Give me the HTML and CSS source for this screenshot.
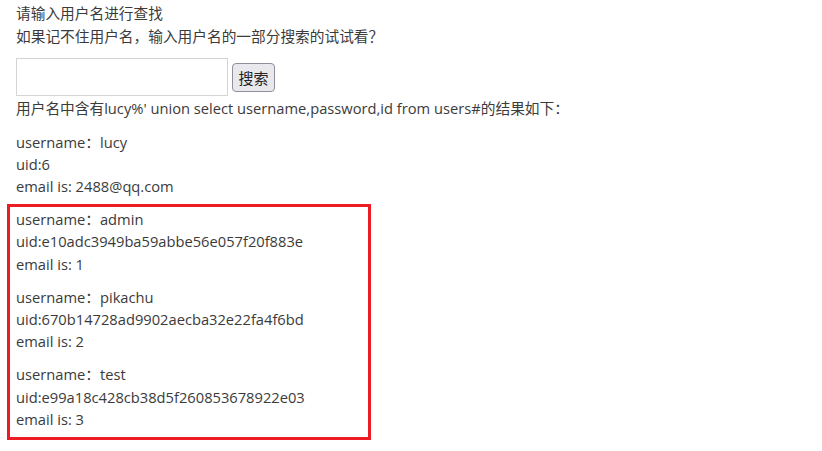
FILE: index.html
```html
<!DOCTYPE html>
<html>
<head>
<meta charset="utf-8">
<link rel="stylesheet" href="styles.css">
</head>
<body>
<div class="page">
  <p class="line first">请输入用户名进行查找</p>
  <p class="line">如果记不住用户名，输入用户名的一部分搜索的试试看？</p>
  <form class="search">
    <input class="search-input" type="text">
    <button class="search-btn" type="button">搜索</button>
  </form>
  <p class="line">用户名中含有lucy%' union select username,password,id from users#的结果如下：</p>
  <div class="entry">
    <p class="line">username：lucy</p>
    <p class="line">uid:6</p>
    <p class="line">email is: 2488@qq.com</p>
  </div>
  <div class="highlight">
    <div class="entry">
      <p class="line">username：admin</p>
      <p class="line">uid:e10adc3949ba59abbe56e057f20f883e</p>
      <p class="line">email is: 1</p>
    </div>
    <div class="entry">
      <p class="line">username：pikachu</p>
      <p class="line">uid:670b14728ad9902aecba32e22fa4f6bd</p>
      <p class="line">email is: 2</p>
    </div>
    <div class="entry">
      <p class="line">username：test</p>
      <p class="line">uid:e99a18c428cb38d5f260853678922e03</p>
      <p class="line">email is: 3</p>
    </div>
  </div>
</div>
</body>
</html>
```
FILE: styles.css
```css
html, body {
  margin: 0;
  padding: 0;
  background: #ffffff;
}
body {
  font-family: "Open Sans", "Noto Sans CJK SC", sans-serif;
  font-size: 14.7px;
  line-height: 22.2px;
  color: #3b3b3b;
}
.page {
  padding: 2px 0 0 16px;
  display: flex;
  flex-direction: column;
  align-items: flex-start;
}
.line {
  margin: 0;
  white-space: nowrap;
}
.first {
  margin-bottom: 1px;
}
.search {
  display: flex;
  align-items: center;
  gap: 4px;
  margin: 11px 0 1px;
}
.search-input {
  box-sizing: border-box;
  width: 212px;
  height: 38px;
  margin: 0;
  border: 1px solid #d4d4d4;
  border-radius: 0;
  background: #fff;
}
.search-btn {
  box-sizing: border-box;
  width: 43px;
  height: 29px;
  margin: 0;
  padding: 0;
  border: 1px solid #8f8f9d;
  border-radius: 4px;
  background: #e9e9ed;
  color: #222;
  font-family: "Noto Sans CJK SC", sans-serif;
  font-size: 15px;
}
.entry {
  display: flex;
  flex-direction: column;
  margin-top: 11px;
}
.highlight {
  margin: 7px 0 0 -9px;
  width: 352px;
  border: 3px solid #ed1c24;
  padding: 1px 0 7px 6px;
}
.highlight .entry:first-child {
  margin-top: 0;
}
```
